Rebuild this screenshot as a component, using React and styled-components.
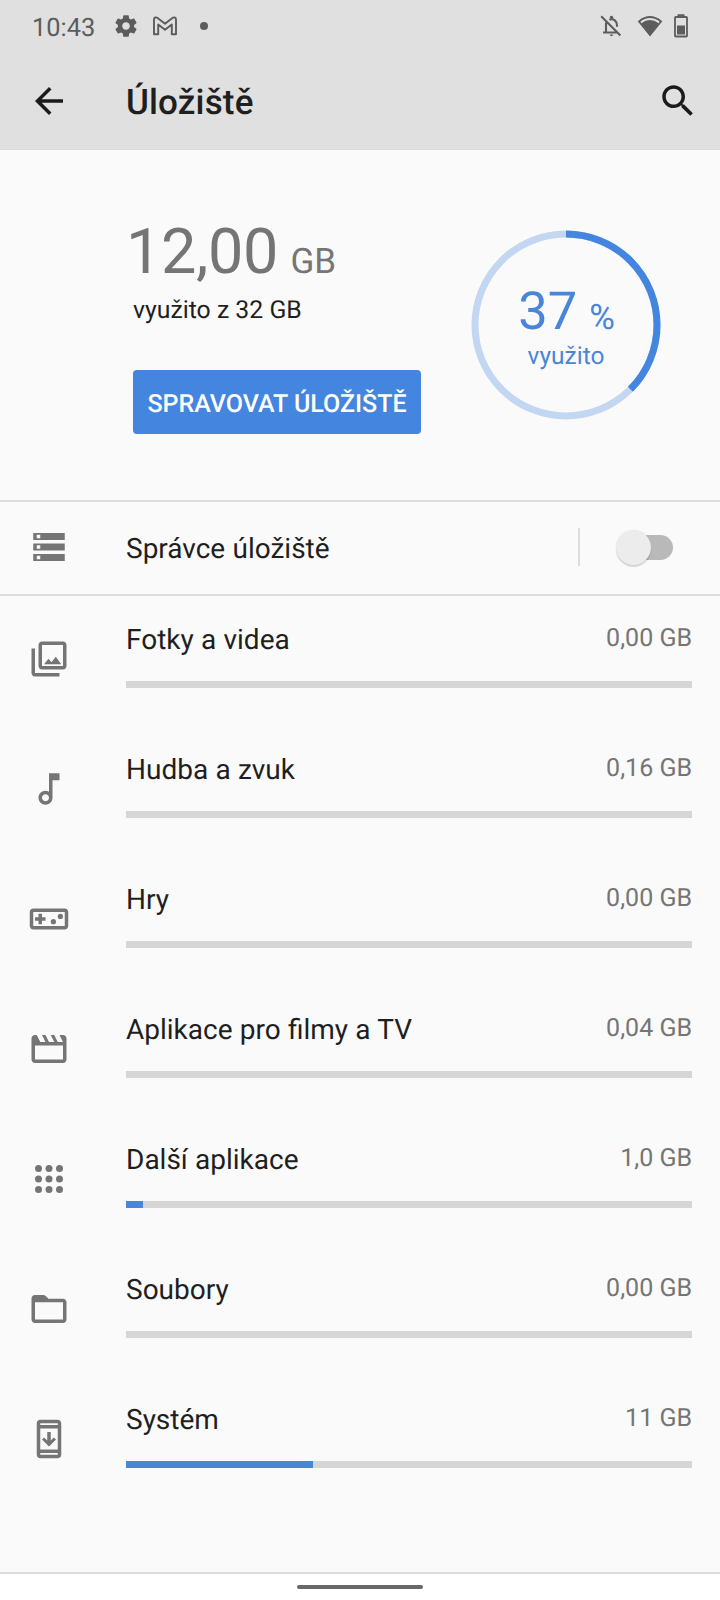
import React from "react";
import styled, { createGlobalStyle } from "styled-components";

const Global = createGlobalStyle`
  * { box-sizing: border-box; }
  html, body { margin: 0; padding: 0; background: #fafafa; }
  body {
    font-family: Roboto, "Noto Sans", sans-serif;
    color: #1f1f1f;
    text-rendering: geometricPrecision;
  }
`;

const Screen = styled.div`
  width: 720px;
  height: 1600px;
  display: flex;
  flex-direction: column;
  background: #fafafa;
  overflow: hidden;
`;

const Header = styled.header`
  height: 150px;
  background: #e0e0e0;
  border-bottom: 1px solid #dcdcdc;
`;

const StatusBar = styled.div`
  height: 52px;
  padding: 0 32px;
  display: flex;
  align-items: center;
  color: #5c5c5c;
`;

const Clock = styled.span`
  width: 64px;
  font-size: 25.4px;
  line-height: 30px;
  padding-top: 3px;
  white-space: nowrap;
`;

const StatusIcon = styled.svg`
  display: block;
  flex: none;
  fill: currentColor;
  width: ${(p) => p.$w}px;
  height: ${(p) => p.$h}px;
  margin-left: ${(p) => p.$gap || 0}px;
`;

const Dot = styled.span`
  width: 8px;
  height: 8px;
  margin-left: 22px;
  border-radius: 50%;
  background: currentColor;
`;

const Spacer = styled.span`
  flex: 1;
`;

const AppBar = styled.div`
  height: 98px;
  padding: 0 21px 0 28px;
  display: flex;
  align-items: center;
`;

const PageTitle = styled.h1`
  margin: 0;
  flex: 1;
  padding: 4px 0 0 56px;
  font-size: 35px;
  line-height: 42px;
  font-weight: 500;
  letter-spacing: 0.15px;
`;

const Icon = styled.svg`
  display: block;
  flex: none;
  width: 42px;
  height: 42px;
  fill: ${(p) => p.$color || "#757575"};
`;

const Summary = styled.section`
  height: 350px;
  padding: 66px 59px 0 126px;
  display: flex;
  justify-content: space-between;
`;

const UsageInfo = styled.div`
  display: flex;
  flex-direction: column;
  align-items: flex-start;
`;

const UsedAmount = styled.div`
  height: 74px;
  font-size: 63px;
  line-height: 74px;
  letter-spacing: -0.4px;
  color: #757575;
  white-space: nowrap;
`;

const AmountUnit = styled.span`
  margin-left: 12.5px;
  font-size: 35px;
  letter-spacing: 0;
`;

const UsedOf = styled.div`
  margin: 6px 0 0 7px;
  font-size: 24.8px;
  line-height: 30px;
`;

const ManageButton = styled.button`
  margin: 44px 0 0 7px;
  width: 288px;
  height: 64px;
  padding: 6px 0 0;
  border: 0;
  border-radius: 4px;
  background: #4485e0;
  color: #fff;
  font: 500 25px/30px Roboto, "Noto Sans", sans-serif;
  text-rendering: geometricPrecision;
  white-space: nowrap;
`;

const Donut = styled.div`
  display: grid;
  width: 190px;
  height: 190px;
  margin-top: 14px;
  > * { grid-area: 1 / 1; }
`;

const Ring = styled.svg`
  display: block;
  width: 190px;
  height: 190px;
`;

const DonutLabel = styled.div`
  display: flex;
  flex-direction: column;
  align-items: center;
  padding: 51px 0 0;
  color: #4a86d8;
  line-height: 30px;
  font-size: 24.5px;
`;

const Percent = styled.div`
  height: 60px;
  padding-left: 1px;
  font-size: 52.5px;
  line-height: 60px;
  white-space: nowrap;
`;

const PercentSign = styled.span`
  margin-left: 12px;
  font-size: 35px;
`;

const ManagerRow = styled.section`
  height: 96px;
  padding: 0 47px 2px 28px;
  display: flex;
  align-items: center;
  border-top: 2px solid #dcdcdc;
  border-bottom: 2px solid #dcdcdc;
`;

const RowTitle = styled.div`
  flex: 1;
  font-size: 28px;
  line-height: 34px;
  word-spacing: 0.3px;
  white-space: nowrap;
`;

const ManagerTitle = styled(RowTitle)`
  padding: 3px 0 0 56px;
`;

const Separator = styled.span`
  width: 2px;
  height: 38px;
  margin-right: 36px;
  background: #dcdcdc;
`;

const Toggle = styled.span`
  width: 57px;
  height: 35px;
  display: flex;
  align-items: center;
`;

const Thumb = styled.span`
  width: 35px;
  height: 35px;
  flex: none;
  border-radius: 50%;
  background: #ececec;
  box-shadow: 0 2px 1px rgba(0, 0, 0, 0.14), 0 0 1px rgba(0, 0, 0, 0.1);
  z-index: 1;
`;

const Track = styled.span`
  width: 49px;
  height: 25px;
  flex: none;
  margin-left: -27px;
  border-radius: 13px;
  background: #b9b9b9;
`;

const CategoryList = styled.main`
  height: 976px;
`;

const Category = styled.div`
  height: 130px;
  padding: 0 28px;
  display: flex;
  > svg { margin-top: 42px; }
`;

const CategoryBody = styled.div`
  flex: 1;
  margin-left: 56px;
  padding-top: 27px;
`;

const CategoryHead = styled.div`
  height: 58px;
  display: flex;
`;

const Size = styled.div`
  font-size: 25px;
  line-height: 32px;
  color: #757575;
`;

const Bar = styled.div`
  height: 7px;
  background: #d6d6d6;
`;

const BarFill = styled.div`
  height: 7px;
  width: ${(p) => p.$width}px;
  background: #4a86d8;
`;

const NavBar = styled.footer`
  height: 28px;
  padding-top: 11px;
  border-top: 2px solid #dcdcdc;
  background: #fff;
  display: flex;
  justify-content: center;
`;

const NavPill = styled.span`
  width: 126px;
  height: 4px;
  border-radius: 2px;
  background: #686868;
`;

const categories = [
  {
    title: "Fotky a videa", size: "0,00 GB", used: 0,
    icon: (
      <path d="M20 4v12H8V4h12m0-2H8c-1.100 0-2 .9-2 2v12c0 1.100.9 2 2 2h12c1.100 0 2-.9 2-2V4c0-1.100-.9-2-2-2zM9.200 15l2.500-3.200 1.700 2 2.500-3.100 3.100 4.300zM2 6v14c0 1.100.9 2 2 2h14v-2H4V6H2z" />
    ),
  },
  {
    title: "Hudba a zvuk", size: "0,16 GB", used: 0,
    icon: (
      <path d="M12 3v10.550c-.59-.34-1.270-.55-2-.55-2.210 0-4 1.790-4 4s1.790 4 4 4 4-1.790 4-4V7h4V3h-6zm-2 16c-1.100 0-2-.9-2-2s.9-2 2-2 2 .9 2 2-.9 2-2 2z" />
    ),
  },
  {
    title: "Hry", size: "0,00 GB", used: 0,
    icon: (
      <>
        <path d="M21 6H3c-1.100 0-2 .9-2 2v8c0 1.100.9 2 2 2h18c1.100 0 2-.9 2-2V8c0-1.100-.9-2-2-2zm0 10H3V8h18v8zM6 15h2v-2h2v-2H8V9H6v2H4v2h2z" />
        <circle cx="14.500" cy="13.500" r="1.500" />
        <circle cx="18.500" cy="10.500" r="1.500" />
      </>
    ),
  },
  {
    title: "Aplikace pro filmy a TV", size: "0,04 GB", used: 0,
    icon: (
      <path d="M20 4h-2l2 4h-3l-2-4h-2l2 4h-3l-2-4H8l2 4H7L5 4H4c-1.100 0-2 .9-2 2v12c0 1.100.9 2 2 2h16c1.100 0 2-.9 2-2V6c0-1.100-.9-2-2-2zm0 14H4v-8h16v8z" />
    ),
  },
  {
    title: "Další aplikace", size: "1,0 GB", used: 17,
    icon: [6, 12, 18].flatMap((y) => [6, 12, 18].map((x) => <circle key={`${x}-${y}`} cx={x} cy={y} r="2" />)),
  },
  {
    title: "Soubory", size: "0,00 GB", used: 0,
    icon: (
      <path d="M20 6.200h-8.300L10.100 4.600C9.700 4.200 9.200 4 8.700 4H4c-1.100 0-2 .9-2 2v12c0 1.100.9 2 2 2h16c1.100 0 2-.9 2-2V8.200c0-1.100-.9-2-2-2zm0 11.800H4V8.100h16V18z" />
    ),
  },
  {
    title: "Systém", size: "11 GB", used: 187,
    icon: (
      <path d="M17 1.010L7 1c-1.100 0-2 .9-2 2v18c0 1.100.9 2 2 2h10c1.100 0 2-.9 2-2V3c0-1.100-.9-1.990-2-1.990zM17 21H7v-1h10v1zm0-3H7V6h10v12zm0-14H7V3h10v1zM16 12.300l-1.200-1.200-1.800 1.700V8h-2v4.800l-1.800-1.700L8 12.300l4 4z" />
    ),
  },
];

export default function App() {
  return (
    <>
      <Global />
      <Screen>
        <Header>
          <StatusBar>
            <Clock>10:43</Clock>
            <StatusIcon $w={26} $h={26} $gap={17} viewBox="0 0 24 24">
              <path d="M19.430 12.980c.04-.32.07-.64.07-.98s-.03-.66-.07-.98l2.110-1.650c.19-.15.24-.42.12-.64l-2-3.460c-.12-.22-.39-.3-.61-.22l-2.490 1c-.52-.4-1.080-.73-1.690-.98l-.38-2.650C14.460 2.180 14.250 2 14 2h-4c-.25 0-.46.18-.49.42l-.38 2.650c-.61.25-1.170.59-1.690.98l-2.490-1c-.23-.09-.49 0-.61.22l-2 3.460c-.13.22-.07.49.12.64l2.110 1.650c-.04.32-.07.65-.07.98s.03.66.07.98l-2.110 1.650c-.19.15-.24.42-.12.64l2 3.460c.12.22.39.3.61.22l2.490-1c.52.4 1.080.73 1.690.98l.38 2.650c.03.24.24.42.49.42h4c.25 0 .46-.18.49-.42l.38-2.650c.61-.25 1.170-.59 1.690-.98l2.490 1c.23.09.49 0 .61-.22l2-3.460c.12-.22.07-.49-.12-.64l-2.110-1.650zM12 15.500c-1.930 0-3.500-1.570-3.500-3.500s1.570-3.500 3.500-3.500 3.500 1.570 3.500 3.500-1.570 3.500-3.500 3.500z" />
            </StatusIcon>
            <StatusIcon $w={26} $h={20} $gap={13} viewBox="0 0 26 20">
              <path d="M2 3.500C2 1.300 4.200.9 5.600 2L13 7.700 20.400 2c1.400-1.100 3.600-.7 3.600 1.500v14.700h-4.200V8.500L13 13.700 6.200 8.500v9.700H2z" fill="none" stroke="currentColor" strokeWidth="1.900" strokeLinejoin="round" />
            </StatusIcon>
            <Dot />
            <Spacer />
            <StatusIcon $w={22} $h={24} viewBox="0 0 22 24">
              <path d="M1.200 2.300L20.400 21.600M6 8.600V18.500M3 18.500h14M9.400 5.800C13.700 4 17 7.200 17 11.400v1.400" fill="none" stroke="currentColor" strokeWidth="2.100" />
              <path d="M9.800 4.800V3q1.700-2.600 3.400 0v1.800zM9.500 20.500h4q-2 3.400-4 0z" />
            </StatusIcon>
            <StatusIcon $w={26} $h={22} $gap={15} viewBox="0 0 26 22">
              <path d="M2 6.500Q13-2.300 24 6.500L13 20z" fill="none" stroke="currentColor" strokeWidth="1.900" />
              <path d="M4.300 8.300Q13 1.800 21.700 8.300L13 20z" />
            </StatusIcon>
            <StatusIcon $w={14} $h={24} $gap={11} viewBox="0 0 14 24">
              <path d="M3.500.3h7v2h-7zM3 11.500h8v9H3z" />
              <rect x="1" y="3" width="12" height="19.500" rx="0.800" fill="none" stroke="currentColor" strokeWidth="1.800" />
            </StatusIcon>
          </StatusBar>
          <AppBar>
            <Icon $color="#1b1b1b" viewBox="0 0 24 24">
              <path d="M20 11H7.830l5.590-5.590L12 4l-8 8 8 8 1.410-1.410L7.830 13H20v-2z" />
            </Icon>
            <PageTitle>Úložiště</PageTitle>
            <Icon $color="#1b1b1b" viewBox="0 0 24 24">
              <path d="M15.500 14h-.79l-.28-.27C15.410 12.590 16 11.110 16 9.500 16 5.910 13.090 3 9.500 3S3 5.910 3 9.500 5.910 16 9.500 16c1.610 0 3.090-.59 4.230-1.570l.27.28v.79l5 4.990L20.490 19l-4.990-5zm-6 0C7.010 14 5 11.990 5 9.500S7.010 5 9.500 5 14 7.010 14 9.500 11.990 14 9.500 14z" />
            </Icon>
          </AppBar>
        </Header>

        <Summary>
          <UsageInfo>
            <UsedAmount>12,00<AmountUnit>GB</AmountUnit></UsedAmount>
            <UsedOf>využito z 32 GB</UsedOf>
            <ManageButton>SPRAVOVAT ÚLOŽIŠTĚ</ManageButton>
          </UsageInfo>
          <Donut>
            <Ring viewBox="0 0 190 190">
              <circle cx="95" cy="95" r="91" fill="none" stroke="#c4d7f2" strokeWidth="7" />
              <circle cx="95" cy="95" r="91" fill="none" stroke="#4485e0" strokeWidth="7" pathLength="100" strokeDasharray="37.500 62.500" transform="rotate(-90 95 95)" />
            </Ring>
            <DonutLabel>
              <Percent>37<PercentSign>%</PercentSign></Percent>
              <span>využito</span>
            </DonutLabel>
          </Donut>
        </Summary>

        <ManagerRow>
          <Icon viewBox="0 0 24 24">
            <path d="M3 20h18v-4H3v4zm2-3h2v2H5v-2zM3 4v4h18V4H3zm4 3H5V5h2v2zm-4 7h18v-4H3v4zm2-3h2v2H5v-2z" />
          </Icon>
          <ManagerTitle>Správce úložiště</ManagerTitle>
          <Separator />
          <Toggle>
            <Thumb />
            <Track />
          </Toggle>
        </ManagerRow>

        <CategoryList>
          {categories.map((c) => (
            <Category key={c.title}>
              <Icon viewBox="0 0 24 24">{c.icon}</Icon>
              <CategoryBody>
                <CategoryHead>
                  <RowTitle>{c.title}</RowTitle>
                  <Size>{c.size}</Size>
                </CategoryHead>
                <Bar>
                  <BarFill $width={c.used} />
                </Bar>
              </CategoryBody>
            </Category>
          ))}
        </CategoryList>

        <NavBar>
          <NavPill />
        </NavBar>
      </Screen>
    </>
  );
}
